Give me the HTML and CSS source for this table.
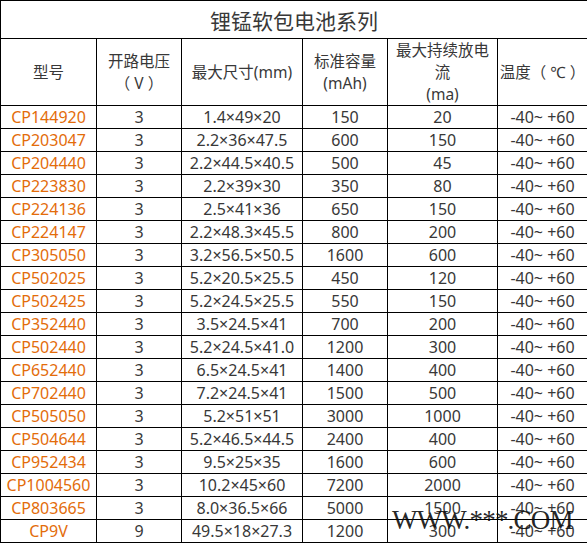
FILE: index.html
```html
<!DOCTYPE html>
<html>
<head>
<meta charset="utf-8">
<link rel="stylesheet" href="styles.css">
</head>
<body>
<div class="wrap">
<table class="spec">
<colgroup>
<col class="c1"><col class="c2"><col class="c3"><col class="c4"><col class="c5"><col class="c6">
</colgroup>
<tr class="title"><td colspan="6">锂锰软包电池系列</td></tr>
<tr class="head">
<td>型号</td>
<td>开路电压<br>（ V ）</td>
<td>最大尺寸(mm)</td>
<td>标准容量<br>(mAh)</td>
<td>最大持续放电<br>流<br>(ma)</td>
<td>温度（ ℃ ）</td>
</tr>
<tr><td class="m">CP144920</td><td>3</td><td>1.4×49×20</td><td>150</td><td>20</td><td>-40~ +60</td></tr>
<tr><td class="m">CP203047</td><td>3</td><td>2.2×36×47.5</td><td>600</td><td>150</td><td>-40~ +60</td></tr>
<tr><td class="m">CP204440</td><td>3</td><td>2.2×44.5×40.5</td><td>500</td><td>45</td><td>-40~ +60</td></tr>
<tr><td class="m">CP223830</td><td>3</td><td>2.2×39×30</td><td>350</td><td>80</td><td>-40~ +60</td></tr>
<tr><td class="m">CP224136</td><td>3</td><td>2.5×41×36</td><td>650</td><td>150</td><td>-40~ +60</td></tr>
<tr><td class="m">CP224147</td><td>3</td><td>2.2×48.3×45.5</td><td>800</td><td>200</td><td>-40~ +60</td></tr>
<tr><td class="m">CP305050</td><td>3</td><td>3.2×56.5×50.5</td><td>1600</td><td>600</td><td>-40~ +60</td></tr>
<tr><td class="m">CP502025</td><td>3</td><td>5.2×20.5×25.5</td><td>450</td><td>120</td><td>-40~ +60</td></tr>
<tr><td class="m">CP502425</td><td>3</td><td>5.2×24.5×25.5</td><td>550</td><td>150</td><td>-40~ +60</td></tr>
<tr><td class="m">CP352440</td><td>3</td><td>3.5×24.5×41</td><td>700</td><td>200</td><td>-40~ +60</td></tr>
<tr><td class="m">CP502440</td><td>3</td><td>5.2×24.5×41.0</td><td>1200</td><td>300</td><td>-40~ +60</td></tr>
<tr><td class="m">CP652440</td><td>3</td><td>6.5×24.5×41</td><td>1400</td><td>400</td><td>-40~ +60</td></tr>
<tr><td class="m">CP702440</td><td>3</td><td>7.2×24.5×41</td><td>1500</td><td>500</td><td>-40~ +60</td></tr>
<tr><td class="m">CP505050</td><td>3</td><td>5.2×51×51</td><td>3000</td><td>1000</td><td>-40~ +60</td></tr>
<tr><td class="m">CP504644</td><td>3</td><td>5.2×46.5×44.5</td><td>2400</td><td>400</td><td>-40~ +60</td></tr>
<tr><td class="m">CP952434</td><td>3</td><td>9.5×25×35</td><td>1600</td><td>600</td><td>-40~ +60</td></tr>
<tr><td class="m">CP1004560</td><td>3</td><td>10.2×45×60</td><td>7200</td><td>2000</td><td>-40~ +60</td></tr>
<tr><td class="m">CP803665</td><td>3</td><td>8.0×36.5×66</td><td>5000</td><td>1500</td><td>-40~ +60</td></tr>
<tr><td class="m">CP9V</td><td>9</td><td>49.5×18×27.3</td><td>1200</td><td>300</td><td>-40~ +60</td></tr>
</table>
<div class="mark">WWW.***.COM</div>
</div>
</body>
</html>
```

FILE: styles.css
```css
html, body {
  margin: 0;
  padding: 0;
  background: #fff;
}
.wrap {
  position: relative;
  width: 587px;
  height: 544px;
  overflow: hidden;
}
.spec {
  border-collapse: collapse;
  table-layout: fixed;
  width: 587px;
  font-family: "Noto Sans", "Noto Sans CJK SC", sans-serif;
  color: #383838;
  font-size: 16px;
}
.c1 { width: 96px; }
.c2 { width: 85px; }
.c3 { width: 121px; }
.c4 { width: 85px; }
.c5 { width: 110px; }
.c6 { width: 90px; }
.spec td {
  border: 1px solid #000;
  text-align: center;
  padding: 0;
  height: 22px;
  line-height: 20px;
  white-space: nowrap;
  overflow: hidden;
}
.spec tr.title td {
  height: 37px;
  font-size: 21px;
  line-height: 30px;
  font-family: "Noto Sans CJK SC", sans-serif;
}
.spec tr.head td {
  height: 66px;
  line-height: 22px;
  font-size: 15.5px;
}
.spec td.m {
  color: #e36c0a;
}
.mark {
  position: absolute;
  left: 392px;
  top: 505px;
  font-family: "Liberation Serif", "DejaVu Serif", serif;
  font-size: 27px;
  color: rgba(10, 10, 10, 0.9);
  letter-spacing: -0.8px;
}
```
